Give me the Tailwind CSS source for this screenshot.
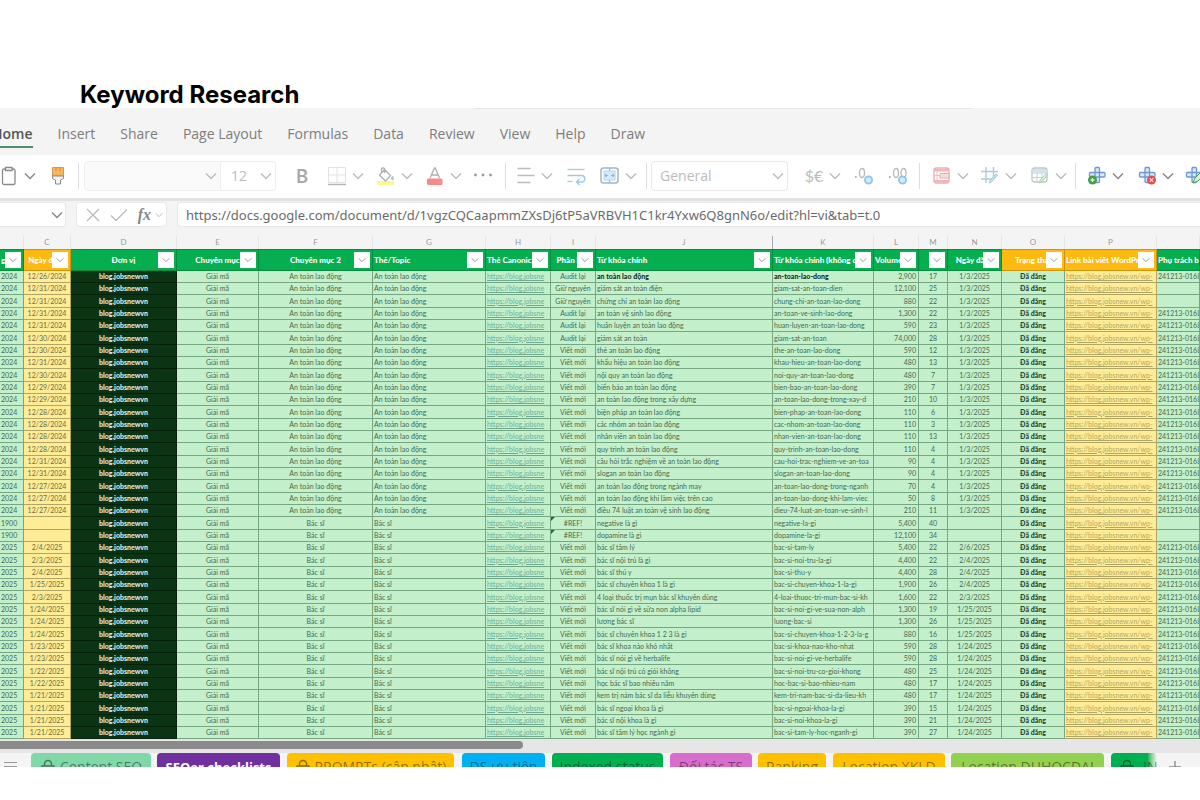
<!DOCTYPE html>
<html lang="vi">
<head>
<meta charset="utf-8">
<title>Keyword Research</title>
<script src="https://cdn.jsdelivr.net/npm/@tailwindcss/browser@4"></script>
</head>
<body class="bg-white font-['Open_Sans','Noto_Sans',sans-serif] overflow-x-hidden">
<svg class="hidden">
  <symbol id="chev" viewBox="0 0 12 12"><path d="M1 3.500l5 5 5-5" fill="none" stroke="currentColor" stroke-width="1.500"/></symbol>
  <symbol id="cross" viewBox="0 0 20 20"><path d="M9 1.500h2.500q1 0 1 1V6.500H17q1 0 1 1V10q0 1-1 1h-4.500v4.500q0 1-1 1H9q-1 0-1-1V11H3.500q-1 0-1-1V7.500q0-1 1-1H8v-4q0-1 1-1zM8 6.500h4.500V11H8z" fill="#d9e8f8" stroke="#6c98d4" stroke-width="1.300"/></symbol>
  <symbol id="lock" viewBox="0 0 16 16"><path d="M2 7h12v8H2zM4.500 7V5a3.500 3.500 0 0 1 7 0v2" fill="none" stroke="currentColor" stroke-width="1.400"/></symbol>
</svg>

<h1 class="pt-20 pl-20 h-27 font-['Inter',sans-serif] font-bold text-2xl leading-[29px] text-black whitespace-nowrap">Keyword Research</h1>

<main class="overflow-hidden bg-[#f4f4f4]">
  <nav class="relative flex h-[47px] items-center gap-[25px] pt-1 text-sm leading-5 text-[#7d7d7d] whitespace-nowrap -ml-2">
    <span class="absolute top-0 left-[483px] h-px w-[497px] bg-[#e6e6e6]"></span>
    <a href="#" class="relative font-semibold text-[#555] after:absolute after:left-0 after:right-0 after:-bottom-1 after:h-0.5 after:bg-[#4f8f6b]">Home</a>
    <a href="#">Insert</a><a href="#">Share</a><a href="#">Page Layout</a><a href="#">Formulas</a><a href="#">Data</a><a href="#">Review</a><a href="#">View</a><a href="#">Help</a><a href="#">Draw</a>
  </nav>

  <div class="flex h-[43px] items-center bg-white pl-px pb-0.5 text-[#bcbcbc] *:shrink-0">
    <button aria-label="Paste" class="flex items-center gap-1.5 text-[#8a8a8a]">
      <svg class="w-[17px] h-5" viewBox="0 0 17 20"><path d="M4 3H3a1.500 1.500 0 0 0-1.500 1.500V17A1.500 1.500 0 0 0 3 18.500h9.500A1.500 1.500 0 0 0 14 17V4.500A1.500 1.500 0 0 0 12.500 3H11M4.500 1.500h6.500v3H4.500z" fill="none" stroke="currentColor" stroke-width="1.300"/></svg>
      <svg class="size-3"><use href="#chev"/></svg></button>
    <button aria-label="Format painter" class="ml-3.5"><svg class="w-4 h-5" viewBox="0 0 16 20"><path d="M2.500 1.500h11V10h-11z" fill="#f7b55c" stroke="#d49a55"/><path d="M6 2v3M10 2v3" stroke="#d98f35"/><path d="M2.500 10h11v2.500l-3 1.500v4h-5v-4l-3-1.500z" fill="#f4f4f4" stroke="#8b8b8b"/></svg></button>
    <span class="ml-3 h-[26px] w-px bg-[#ddd]"></span>
    <button aria-label="Font" class="ml-[5px] flex h-[30px] w-[137px] items-center justify-end rounded-l border border-[#eee] bg-[#fafafa] pr-[3px]"><svg class="size-3"><use href="#chev"/></svg></button>
    <button class="flex h-[30px] w-[55px] items-center justify-between rounded-r border border-l-0 border-[#eee] pl-2.5 pr-[3px] text-sm">12<svg class="size-3"><use href="#chev"/></svg></button>
    <button class="ml-[18px] w-4 text-center text-[19px] leading-6 font-semibold text-[#a8a8a8]">B</button>
    <button aria-label="Borders" class="ml-[17px] flex items-center gap-[5px]">
      <svg class="size-5" viewBox="0 0 20 20"><path d="M1.500 1.500h17v15h-17zM10 1.500v15M1.500 9h17" fill="none" stroke="#e2e2e2"/><path d="M1 18.500h18" stroke="#b5b5b5" stroke-width="1.500"/></svg>
      <svg class="size-3"><use href="#chev"/></svg></button>
    <button aria-label="Fill color" class="ml-3 flex items-center gap-[5px]">
      <svg class="size-5" viewBox="0 0 20 20"><path d="M1 15h17v4H1z" fill="#fbf78f"/><path d="M8.500 3.500l6 6-5 5.500-6-6zM8.500 7V2.500a2 2 0 0 0-3 0V7" fill="none" stroke="#b0b0b0" stroke-width="1.300"/><path d="M16.500 9.500c2.500 3 1.500 4.500 0 4.500s-2.500-1.500 0-4.500z" fill="#b9c6cf"/></svg>
      <svg class="size-3"><use href="#chev"/></svg></button>
    <button aria-label="Font color" class="ml-3 flex items-center gap-[5px]">
      <svg class="size-5" viewBox="0 0 20 20"><path d="M5 12L9.500 2h.6L14.500 12M6.500 9h6.500" fill="none" stroke="#b0b0b0" stroke-width="1.300"/><rect x="2" y="12.500" width="15.500" height="6.500" rx="1.500" fill="#f58a8a"/></svg>
      <svg class="size-3"><use href="#chev"/></svg></button>
    <button aria-label="More" class="ml-[11px]"><svg class="size-5" viewBox="0 0 20 20" fill="#999"><circle cx="2.500" cy="9" r="1.400"/><circle cx="10" cy="9" r="1.400"/><circle cx="17.500" cy="9" r="1.400"/></svg></button>
    <span class="ml-3 h-[26px] w-px bg-[#ddd]"></span>
    <button aria-label="Align" class="ml-2.5 flex items-center gap-[5px]">
      <svg class="size-5" viewBox="0 0 20 20"><path d="M1.500 2.500h13M1.500 9.500h17M1.500 16.500h13" stroke="currentColor" stroke-width="1.500"/></svg>
      <svg class="size-3"><use href="#chev"/></svg></button>
    <button aria-label="Wrap text" class="ml-[13px]"><svg class="size-5" viewBox="0 0 20 20" fill="none" stroke-width="1.400"><path d="M1.500 3.500h17" stroke="#c4c4c4"/><path d="M1.500 9.500h14a3 3 0 0 1 0 6.500h-4M13.500 13l-3 3 3 3" stroke="#9ccbea"/><path d="M1.500 15.500h5" stroke="#c4c4c4"/></svg></button>
    <button aria-label="Merge" class="ml-3.5 flex items-center gap-[5px]">
      <svg class="size-5" viewBox="0 0 20 20" fill="none"><rect x="1" y="2" width="17" height="15" rx="2.500" stroke="#a3b5c1" stroke-width="1.500"/><rect x="4" y="5" width="11" height="9" fill="#d5ebfa" stroke="#b5d8ef"/><path d="M9.500 2v3M9.500 14v3M5 9.500h3M11 9.500h3M6.500 8L5 9.500 6.500 11M12.500 8L14 9.500 12.500 11" stroke="#8abfe4" stroke-width="1.200"/></svg>
      <svg class="size-3"><use href="#chev"/></svg></button>
    <span class="ml-[9px] h-[26px] w-px bg-[#ddd]"></span>
    <button class="ml-1 flex h-[30px] w-[137px] items-center justify-between rounded border border-[#e9e9e9] pl-2 pr-[3px] text-sm">General<svg class="size-3"><use href="#chev"/></svg></button>
    <button class="ml-4 flex items-center gap-[5px] text-base leading-5"><span class="w-5 text-center whitespace-nowrap font-['Lato',sans-serif]">$€</span><svg class="size-3"><use href="#chev"/></svg></button>
    <button aria-label="Increase decimal" class="ml-[13px]"><svg class="size-5" viewBox="0 0 20 20" fill="none"><circle cx="1.800" cy="11" r="1" fill="#aaa"/><ellipse cx="8" cy="7" rx="2.500" ry="4.500" stroke="#b8b8b8" stroke-width="1.300"/><circle cx="14.500" cy="14" r="3.600" fill="#d3eafb" stroke="#8cc4ee" stroke-width="1.800"/></svg></button>
    <button aria-label="Decrease decimal" class="ml-3.5"><svg class="size-5" viewBox="0 0 20 20" fill="none"><circle cx="1.800" cy="11" r="1" fill="#aaa"/><ellipse cx="8" cy="7" rx="2.500" ry="4.500" stroke="#b8b8b8" stroke-width="1.300"/><ellipse cx="15.500" cy="7" rx="2.500" ry="4.500" stroke="#b8b8b8" stroke-width="1.300"/><circle cx="14.500" cy="14" r="3.600" fill="#d3eafb" stroke="#8cc4ee" stroke-width="1.800"/></svg></button>
    <span class="ml-[11px] h-[26px] w-px bg-[#ddd]"></span>
    <button aria-label="Conditional formatting" class="ml-3 flex items-center gap-[5px]">
      <svg class="size-5" viewBox="0 0 20 20" fill="none"><rect x="2" y="2" width="15" height="15" rx="2.500" stroke="#ecadb2" stroke-width="1.400"/><path d="M2.500 3h14v2.500h-14zM2.500 14h14v2.500h-14z" fill="#f6b4b8"/><path d="M8 7.500h9v4.500H8z" fill="#fbdcde" stroke="#ecadb2"/><path d="M5 2v15M2 9.500h6" stroke="#efbcc0"/></svg>
      <svg class="size-3"><use href="#chev"/></svg></button>
    <button aria-label="Format cells" class="ml-[11px] flex items-center gap-[5px]">
      <svg class="size-5" viewBox="0 0 20 20" fill="none" stroke-width="1.400"><path d="M6 1v16M13.500 1v9M1 5.500h17M1 13h11" stroke="#b0cadb"/><path d="M17.500 9l-5.500 6.500-2.500 1.500.7-3 5.500-6z" fill="#c2e3ea" stroke="#a3cad6" stroke-width="1"/></svg>
      <svg class="size-3"><use href="#chev"/></svg></button>
    <button aria-label="Format table" class="ml-[13px] flex items-center gap-[5px]">
      <svg class="size-5" viewBox="0 0 20 20" fill="none"><rect x="2" y="2" width="15" height="14" rx="2.500" stroke="#bcc6cc" stroke-width="1.300"/><path d="M2.500 3h14v3.500h-14z" fill="#cce5f4"/><path d="M2 7h15M2 11.500h15M7 7v9M12 7v9" stroke="#c4d1d9"/><path d="M17.500 9l-5.500 6.500-2.500 1.500.7-3 5.500-6z" fill="#d8efdc" stroke="#a9d3b3"/></svg>
      <svg class="size-3"><use href="#chev"/></svg></button>
    <span class="ml-2 h-[26px] w-px bg-[#ddd]"></span>
    <button aria-label="Insert cells" class="ml-[11px] flex items-center gap-[5px] text-[#888]">
      <svg class="size-5" viewBox="0 0 20 20"><use href="#cross"/><circle cx="5.500" cy="14" r="4.500" fill="#43a047"/><path d="M3.500 14h4M5.500 12v4" stroke="#d9f5da" stroke-width="1.300"/></svg>
      <svg class="size-3"><use href="#chev"/></svg></button>
    <button aria-label="Delete cells" class="ml-[13px] flex items-center gap-[5px] text-[#888]">
      <svg class="size-5" viewBox="0 0 20 20"><use href="#cross"/><circle cx="14.500" cy="14" r="4.500" fill="#e84a4a"/><path d="M12.700 12.200l3.600 3.600m0-3.600l-3.600 3.600" stroke="#fde0e0" stroke-width="1.200"/></svg>
      <svg class="size-3"><use href="#chev"/></svg></button>
    <button aria-label="Format" class="ml-2.5"><svg class="size-5" viewBox="0 0 20 20"><use href="#cross"/><path d="M9 17l2-5 5-5 3 3-5 5z" fill="#d8f0dc" stroke="#43a047"/></svg></button>
  </div>

  <div class="flex items-center gap-2.5 border-t-3 border-[#e2e2e2] pt-px pb-px *:h-[25px] *:rounded *:border *:border-[#e8e8e8] *:bg-white">
    <button aria-label="Name box" class="flex w-[66px] shrink-0 items-center justify-end rounded-l-none! border-l-0! pr-0.5 text-[#888]"><svg class="size-3"><use href="#chev"/></svg></button>
    <div class="flex w-[91px] shrink-0 items-center justify-between pl-2 pr-[3px] text-[#bcbcbc]">
      <button aria-label="Cancel"><svg class="size-4" viewBox="0 0 16 16"><path d="M2 2l12 12m0-12l-12 12" stroke="currentColor" stroke-width="1.400"/></svg></button>
      <button aria-label="Enter"><svg class="w-[18px] h-4" viewBox="0 0 18 16"><path d="M1 8.500L6 13.500 17 2.500" fill="none" stroke="currentColor" stroke-width="1.400"/></svg></button>
      <button class="flex items-center gap-1 font-['Liberation_Serif',serif] text-base leading-4 font-bold italic text-[#888]">fx<svg class="size-2 text-[#bbb]"><use href="#chev"/></svg></button>
    </div>
    <input aria-label="Formula" class="min-w-0 flex-1 rounded-r-none! border-r-0! px-2 font-['Noto_Sans',sans-serif] text-[13px] text-[#6a6a6a]" value="https://docs.google.com/document/d/1vgzCQCaapmmZXsDj6tP5aVRBVH1C1kr4Yxw6Q8gnN6o/edit?hl=vi&amp;tab=t.0">
  </div>

  <table class="mt-2 w-full table-fixed border-separate border-spacing-0 font-['Lato','Noto_Sans',sans-serif] text-[7px] leading-[11px] text-[#456a50] whitespace-nowrap">
    <colgroup><col class="w-6"><col class="w-[47px]"><col class="w-[106px]"><col class="w-[82px]"><col class="w-[114px]"><col class="w-[113px]"><col class="w-[65px]"><col class="w-[45px]"><col class="w-[177px]"><col class="w-[101px]"><col class="w-[45px]"><col class="w-[29px]"><col class="w-[54px]"><col class="w-[63px]"><col class="w-[92px]"><col></colgroup>
    <thead id="head"></thead>
    <tbody id="rows" class="[&>tr]:h-3 [&>tr:nth-child(3n)]:h-[13px]"></tbody>
  </table>

  <div class="h-[14px] bg-[#e6e6e6] pt-0.5"><div class="h-2 w-[523px] rounded-r-full bg-[#8a8a8a]"></div></div>

  <div class="flex h-[14px] items-start overflow-hidden text-sm leading-[28px] text-black/45 whitespace-nowrap *:h-[28px] *:shrink-0 *:rounded-t-sm">
    <button aria-label="All sheets" class="mr-3.5 w-[17px] pl-1"><svg class="h-[28px] w-[13px]" viewBox="0 0 13 28"><path d="M0 9.500h13M0 13.500h13M0 17.500h13" stroke="#999" stroke-width="1.200"/></svg></button>
    <button class="flex w-[120px] items-center justify-center gap-1 bg-[#80d8a8]"><svg class="size-4"><use href="#lock"/></svg>Content SEO</button>
    <button class="ml-1.5 w-[123px] bg-[#7030a0] text-[13px] font-bold text-white">SEOer checklists</button>
    <button class="ml-[7px] flex w-[167px] items-center justify-center gap-1 bg-[#ffc000]"><svg class="size-4"><use href="#lock"/></svg>PROMPTs (cập nhật)</button>
    <button class="ml-2 w-[83px] bg-[#00b0f0]">DS ưu tiên</button>
    <button class="ml-[7px] w-[111px] bg-[#00b050]">Indexed status</button>
    <button class="ml-[7px] w-[82px] bg-[#d86dcd]">Đối tác TS</button>
    <button class="ml-1.5 w-[68px] bg-[#ffc000]">Ranking</button>
    <button class="ml-[7px] w-[112px] bg-[#ffc000]">Location XKLD</button>
    <button class="ml-1.5 w-[153px] bg-[#92d050]">Location DUHOCDAI</button>
    <button class="ml-[7px] flex w-[46px] items-center gap-2 overflow-hidden bg-linear-to-r from-[#00b050] from-80% to-[#f4f4f4] pl-2"><svg class="size-4 shrink-0"><use href="#lock"/></svg>IN</button>
    <button aria-label="Add sheet" class="ml-2.5 pl-0.5"><svg class="h-[28px] w-3" viewBox="0 0 12 28"><path d="M6 8v12M0 14h12" stroke="#888" stroke-width="1.300"/></svg></button>
  </div>
</main>

<script>
const keywords = [
 ['an toàn lao động','an-toan-lao-dong'],['giám sát an toàn điện','giam-sat-an-toan-dien'],['chứng chỉ an toàn lao động','chung-chi-an-toan-lao-dong'],
 ['an toàn vệ sinh lao động','an-toan-ve-sinh-lao-dong'],['huấn luyện an toàn lao động','huan-luyen-an-toan-lao-dong'],['giám sát an toàn','giam-sat-an-toan'],
 ['thẻ an toàn lao động','the-an-toan-lao-dong'],['khẩu hiệu an toàn lao động','khau-hieu-an-toan-lao-dong'],['nội quy an toàn lao động','noi-quy-an-toan-lao-dong'],
 ['biển báo an toàn lao động','bien-bao-an-toan-lao-dong'],['an toàn lao động trong xây dựng','an-toan-lao-dong-trong-xay-d'],['biện pháp an toàn lao động','bien-phap-an-toan-lao-dong'],
 ['các nhóm an toàn lao động','cac-nhom-an-toan-lao-dong'],['nhân viên an toàn lao động','nhan-vien-an-toan-lao-dong'],['quy trình an toàn lao động','quy-trinh-an-toan-lao-dong'],
 ['câu hỏi trắc nghiệm về an toàn lao động','cau-hoi-trac-nghiem-ve-an-toa'],['slogan an toàn lao động','slogan-an-toan-lao-dong'],['an toàn lao động trong ngành may','an-toan-lao-dong-trong-nganh'],
 ['an toàn lao động khi làm việc trên cao','an-toan-lao-dong-khi-lam-viec'],['điều 74 luật an toàn vệ sinh lao động','dieu-74-luat-an-toan-ve-sinh-l'],['negative là gì','negative-la-gi'],
 ['dopamine là gì','dopamine-la-gi'],['bác sĩ tâm lý','bac-si-tam-ly'],['bác sĩ nội trú là gì','bac-si-noi-tru-la-gi'],['bác sĩ thú y','bac-si-thu-y'],['bác sĩ chuyên khoa 1 là gì','bac-si-chuyen-khoa-1-la-gi'],
 ['4 loại thuốc trị mụn bác sĩ khuyên dùng','4-loai-thuoc-tri-mun-bac-si-kh'],['bác sĩ nói gì về sữa non alpha lipid','bac-si-noi-gi-ve-sua-non-alph'],['lương bác sĩ','luong-bac-si'],
 ['bác sĩ chuyên khoa 1 2 3 là gì','bac-si-chuyen-khoa-1-2-3-la-g'],['bác sĩ khoa nào khó nhất','bac-si-khoa-nao-kho-nhat'],['bác sĩ nói gì về herbalife','bac-si-noi-gi-ve-herbalife'],
 ['bác sĩ nội trú có giỏi không','bac-si-noi-tru-co-gioi-khong'],['học bác sĩ bao nhiêu năm','hoc-bac-si-bao-nhieu-nam'],['kem trị nám bác sĩ da liễu khuyên dùng','kem-tri-nam-bac-si-da-lieu-kh'],
 ['bác sĩ ngoại khoa là gì','bac-si-ngoai-khoa-la-gi'],['bác sĩ nội khoa là gì','bac-si-noi-khoa-la-gi'],['bác sĩ tâm lý học ngành gì','bac-si-tam-ly-hoc-nganh-gi']];
const dates = '12/26 12/31 12/31 12/31 12/31 12/30 12/30 12/31 12/30 12/29 12/29 12/28 12/28 12/28 12/28 12/31 12/31 12/27 12/27 12/27 - - 2/4 2/3 2/4 1/25 2/3 1/24 1/24 1/24 1/23 1/23 1/22 1/22 1/21 1/21 1/21 1/21'.split(' ');
const volumes = '2,900 12,100 880 1,300 590 74,000 590 480 480 390 210 110 110 110 110 90 90 70 50 210 5,400 12,100 5,400 4,400 4,400 1,900 1,600 1,300 1,300 880 590 590 480 480 480 390 390 390'.split(' ');
const difficulty = '17 25 22 22 23 28 12 13 7 7 10 6 3 13 4 4 4 4 8 11 40 34 22 22 28 26 22 19 26 16 28 28 25 17 17 15 21 27'.split(' ');
const posted = [...Array(20).fill('1/3'),'','','2/6','2/4','2/4','2/4','2/3','1/25','1/25','1/25',...Array(8).fill('1/24')];
const kinds = i => i===1||i===2 ? 'Giữ nguyên' : i<6 ? 'Audit lại' : i===20||i===21 ? '#REF!' : 'Viết mới';

const letters = ['','C','D','E','F','G','H','I','J','K','L','M','N','O','P',''];
const titles = ['g','Ngày đăng','Đơn vị','Chuyên mục','Chuyên mục 2','Thẻ/Topic','Thẻ Canonical','Phân loại','Từ khóa chính','Từ khóa chính (không d','Volume','','Ngày đăng','Trạng thái','Link bài viết WordPre','Phụ trách bà'];
const left = [0,5,6,8,9,10,14,15];
const gold = [1,13,14];
document.getElementById('head').innerHTML =
 '<tr>' + letters.map((l,i)=>`<th class="h-[13px] border-r border-[#e6e6e6] p-0 font-normal text-[8px] text-[#999] ${i===8?'border-r-[#aaa]!':''}">${l}</th>`).join('') + '</tr>' +
 '<tr>' + titles.map((t,i)=>`<th class="relative h-[22px] overflow-hidden border-r border-t border-b border-black/20 p-0 text-[8px] font-black text-white ${gold.includes(i)?'bg-[#ffb911]':'bg-[#05ae4e]'}"><div class="px-px ${left.includes(i)?'text-left':'text-center'}">${t}</div>${i<15?`<button aria-label="Filter" class="absolute right-0.5 top-0.5 flex size-4 items-center justify-center bg-white text-[#999]"><svg class="size-2"><use href="#chev"/></svg></button>`:''}</th>`).join('') + '</tr>';

const green = 'overflow-hidden border-r border-b bg-[#c3f0cb] border-[#76a783]';
const yellow = 'overflow-hidden border-r border-b bg-[#ffec96] border-[#b3a563]';
document.getElementById('rows').innerHTML = keywords.map(([k,slug],i)=>{
  const safety = i<20, ref = i===20||i===21, topic = safety?'An toàn lao động':'Bác sĩ', strong = i===0?'font-black text-[#16301d]':'';
  return `<tr>
  <td class=" ${green} p-0 pl-px">${safety?'2024':ref?'1900':'2025'}</td>
  <td class=" ${yellow} p-0 text-center text-[#6f6a3c]">${ref?'':dates[i]+(safety?'/2024':'/2025')}</td>
  <td class="overflow-hidden border-r border-b border-[#04200b] bg-[#0a3414] p-0 text-center font-black text-[#e4ece5]">blog.jobsnewvn</td>
  <td class=" ${green} p-0 text-center">Giải mã</td>
  <td class=" ${green} p-0 text-center">${topic}</td>
  <td class=" ${green} p-0 pl-px">${topic}</td>
  <td class=" ${green} p-0 px-px"><a href="#" class="text-[#6fae94] underline">https://blog.jobsne</a></td>
  <td class=" ${green} relative p-0 text-center">${ref?'<span class="absolute left-0 top-0 border-2 border-b-transparent border-r-transparent border-[#1f6b39]"></span>':''}${kinds(i)}</td>
  <td class=" ${green} p-0 pl-px ${strong}">${k}</td>
  <td class=" ${green} p-0 pl-px ${strong}">${slug}</td>
  <td class=" ${green} p-0 pr-0.5 text-right">${volumes[i]}</td>
  <td class=" ${green} p-0 text-center">${difficulty[i]}</td>
  <td class=" ${green} p-0 text-center">${posted[i]?posted[i]+'/2025':''}</td>
  <td class=" ${green} p-0 text-center font-black text-[#2a4a33]">Đã đăng</td>
  <td class=" ${yellow} p-0 px-px"><a href="#" class="text-[#b0a964] underline">https://blog.jobsnew.vn/wp-</a></td>
  <td class=" ${green} p-0 pl-px">${i===1||i===2||ref?'':'241213-0168'}</td></tr>`;
}).join('');
</script>
</body>
</html>
